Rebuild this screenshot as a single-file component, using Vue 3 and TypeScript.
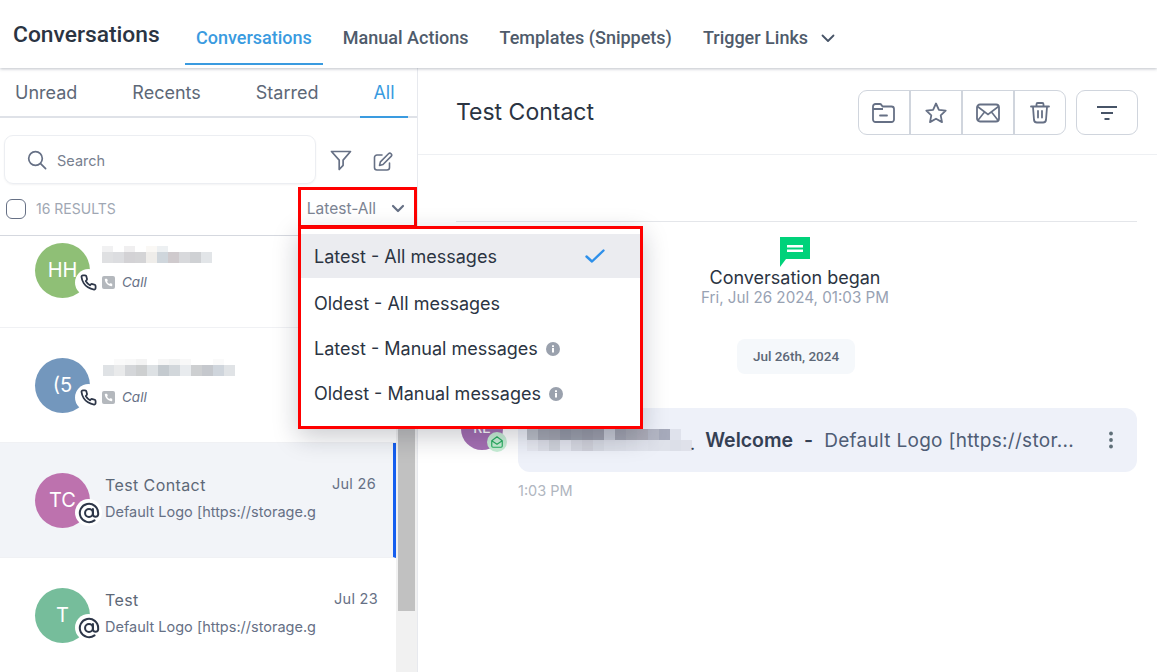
<script setup lang="ts">
const navTabs = [
  { label: 'Conversations', active: true },
  { label: 'Manual Actions', active: false },
  { label: 'Templates (Snippets)', active: false },
  { label: 'Trigger Links', active: false, caret: true },
]
const sideTabs = ['Unread', 'Recents', 'Starred', 'All']
const phone = 'M22 16.920v3a2 2 0 0 1-2.180 2 19.790 19.790 0 0 1-8.630-3.070 19.500 19.500 0 0 1-6-6 19.790 19.790 0 0 1-3.070-8.670A2 2 0 0 1 4.110 2h3a2 2 0 0 1 2 1.720c.130.960.360 1.900.700 2.810a2 2 0 0 1-.450 2.110L8.090 9.910a16 16 0 0 0 6 6l1.270-1.270a2 2 0 0 1 2.110-.450c.910.340 1.850.570 2.810.700A2 2 0 0 1 22 16.920z'
const blurA = [
  ['#f1f1f2', '#fff', '#f0eff0', '#fff', '#faf8f5', '#edf0f2', '#fff', '#fff', '#fff', '#fff'],
  ['#dfe0e2', '#dcdde0', '#d3d2d5', '#d4d4d6', '#efedea', '#cfd6dc', '#cfcacd', '#d8d9dc', '#cfd1d4', '#e2e5e8'],
]
const blurB = [
  ['#fff', '#fafafa', '#f8f8f8', '#f3f3f3', '#fff', '#f6f6f6', '#f2f3f3', '#f8f8f8', '#fff', '#fff', '#fafafa', '#fff'],
  ['#dfe2e5', '#e9eaeb', '#d4d6d9', '#cdcfd0', '#dde1e4', '#c4cacf', '#d2d7db', '#e8ebee', '#cdcfd1', '#c5c8cd', '#cfd5dc', '#e0e3e6'],
]
const blurC = [
  ['#bcc0c9', '#a5a8b3', '#a3a5b0', '#979ba8', '#9da1ad', '#9a9ca9', '#9ea0ad', '#c8cbd6', '#a2a4b1', '#a9abb6', '#acacb8', '#b3b6c4', '#a6aabb', '#dfe2ec', '#eef1f9'],
  ['#e6e8f0', '#dcdee7', '#cfd2da', '#e3e5ee', '#d5d7e0', '#cfd0d9', '#d6d9e2', '#dcdfe8', '#dde0e9', '#dfe2eb', '#e0e3ec', '#dee1ea', '#dfe2ea', '#dcdfe8', '#dfe1ea'],
]
const menu = [
  { label: 'Latest - All messages', selected: true },
  { label: 'Oldest - All messages' },
  { label: 'Latest - Manual messages', info: true },
  { label: 'Oldest - Manual messages', info: true },
]
</script>

<template>
  <div class="page">
    <header class="topbar">
      <div class="brand">Conversations</div>
      <nav class="nav">
        <div v-for="t in navTabs" :key="t.label" class="nav-tab" :class="{ active: t.active }">
          {{ t.label }}
          <svg v-if="t.caret" class="caret" width="14" height="9" viewBox="0 0 14 9" fill="none"><path d="M1.500 1.500 7 7l5.500-5.500" stroke="#475467" stroke-width="1.800" stroke-linecap="round" stroke-linejoin="round"/></svg>
        </div>
      </nav>
    </header>

    <div class="body">
      <aside class="side">
        <div class="side-tabs">
          <div v-for="t in sideTabs" :key="t" class="side-tab" :class="{ on: t === 'All' }">{{ t }}</div>
        </div>
        <div class="search-row">
          <div class="search">
            <svg width="20" height="20" viewBox="0 0 20 20" fill="none"><circle cx="8.500" cy="8.500" r="6.800" stroke="#667085" stroke-width="1.700"/><path d="m13.600 13.600 5 5" stroke="#667085" stroke-width="1.700" stroke-linecap="round"/></svg>
            <span>Search</span>
          </div>
          <svg class="ic-filter" width="22" height="21" viewBox="0 0 22 21" fill="none"><path d="M1.500 1.500h19l-7.400 8.600v5.200l-3.900 4.200v-9.400z" stroke="#667085" stroke-width="1.700" stroke-linejoin="round"/></svg>
          <svg class="ic-edit" width="20" height="20" viewBox="0 0 20 20" fill="none"><path d="M9 3H4a2.500 2.500 0 0 0-2.500 2.500v10A2.500 2.500 0 0 0 4 18h10a2.500 2.500 0 0 0 2.500-2.500V11" stroke="#667085" stroke-width="1.600" stroke-linecap="round"/><path d="M15.500 1.800a1.800 1.800 0 0 1 2.600 2.600L10 12.500l-3.500.9.900-3.500z" stroke="#667085" stroke-width="1.600" stroke-linejoin="round"/></svg>
        </div>
        <div class="results">
          <span class="check"></span>
          <span class="count">16 RESULTS</span>
          <span class="sort">Latest-All</span>
          <svg width="14" height="9" viewBox="0 0 14 9" fill="none"><path d="M2 2l5 5 5-5" stroke="#667085" stroke-width="2.200" stroke-linecap="round" stroke-linejoin="round"/></svg>
        </div>
        <div class="list-wrap">
          <div class="list">
            <div class="item first">
              <div class="avatar green">HH
                <span class="badge"><svg width="17" height="17" viewBox="0 0 24 24" fill="none"><path :d="phone" stroke="#2d3648" stroke-width="2.500" stroke-linejoin="round"/></svg></span>
              </div>
              <div class="call-body">
                <div class="blur blur-a">
                  <div v-for="(r, i) in blurA" :key="i" class="blur-row">
                    <i v-for="(c, j) in r" :key="j" :style="{ background: c }"></i>
                  </div>
                </div>
                <div class="call-line">
                  <span class="call-ic"><svg width="9" height="9" viewBox="0 0 24 24"><path :d="phone" fill="#fff"/></svg></span>
                  <em>Call</em>
                </div>
              </div>
            </div>
            <div class="item">
              <div class="avatar blue">(5
                <span class="badge"><svg width="17" height="17" viewBox="0 0 24 24" fill="none"><path :d="phone" stroke="#2d3648" stroke-width="2.500" stroke-linejoin="round"/></svg></span>
              </div>
              <div class="call-body">
                <div class="blur blur-b">
                  <div v-for="(r, i) in blurB" :key="i" class="blur-row">
                    <i v-for="(c, j) in r" :key="j" :style="{ background: c }"></i>
                  </div>
                </div>
                <div class="call-line second">
                  <span class="call-ic"><svg width="9" height="9" viewBox="0 0 24 24"><path :d="phone" fill="#fff"/></svg></span>
                  <em>Call</em>
                </div>
              </div>
            </div>
            <div class="item selected">
              <div class="avatar pink">TC
                <span class="badge"><svg width="22" height="22" viewBox="0 0 24 24" fill="none"><circle cx="12" cy="12" r="4.300" stroke="#2d3648" stroke-width="2.200"/><path d="M16.300 7.700v6.100a2.900 2.900 0 0 0 5.700 0V12a10 10 0 1 0-4 8" stroke="#2d3648" stroke-width="2.200" stroke-linecap="round"/></svg></span>
              </div>
              <div class="mail-body">
                <div class="name-row"><span class="name">Test Contact</span><span class="date">Jul 26</span></div>
                <div class="preview">Default Logo [https://storage.g</div>
              </div>
            </div>
            <div class="item">
              <div class="avatar teal">T
                <span class="badge"><svg width="22" height="22" viewBox="0 0 24 24" fill="none"><circle cx="12" cy="12" r="4.300" stroke="#2d3648" stroke-width="2.200"/><path d="M16.300 7.700v6.100a2.900 2.900 0 0 0 5.700 0V12a10 10 0 1 0-4 8" stroke="#2d3648" stroke-width="2.200" stroke-linecap="round"/></svg></span>
              </div>
              <div class="mail-body">
                <div class="name-row"><span class="name">Test</span><span class="date d2">Jul 23</span></div>
                <div class="preview">Default Logo [https://storage.g</div>
              </div>
            </div>
          </div>
          <div class="scrollbar"><div class="thumb"></div></div>
        </div>
      </aside>

      <main class="main">
        <div class="main-head">
          <h1>Test Contact</h1>
          <div class="actions">
            <div class="act-group">
              <button><svg width="26" height="24" viewBox="0 0 26 24" fill="none"><path d="M2 5.500A2.500 2.500 0 0 1 4.500 3h4.300a2 2 0 0 1 1.700.900l1 1.600h9A2.500 2.500 0 0 1 23 8v10.500a2.500 2.500 0 0 1-2.500 2.500h-16A2.500 2.500 0 0 1 2 18.500zM2 8h10" stroke="#667085" stroke-width="1.800" stroke-linejoin="round"/><path d="M9 14.500h7" stroke="#667085" stroke-width="1.800" stroke-linecap="round"/></svg></button>
              <button><svg width="24" height="24" viewBox="0 0 24 24" fill="none"><path d="m12 2.500 2.900 6.300 6.800.8-5 4.700 1.300 6.800-6-3.400-6 3.400 1.300-6.800-5-4.700 6.800-.8z" stroke="#667085" stroke-width="1.800" stroke-linejoin="round"/></svg></button>
              <button><svg width="26" height="22" viewBox="0 0 26 22" fill="none"><rect x="2" y="2.500" width="22" height="17" rx="3" stroke="#667085" stroke-width="1.800"/><path d="m2.500 4.500 10.500 8 10.500-8M2.800 18.500 9.500 10M23.200 18.500 16.500 10" stroke="#667085" stroke-width="1.600"/></svg></button>
              <button><svg width="22" height="24" viewBox="0 0 22 24" fill="none"><path d="M2 5.500h18M7.500 5V3.200A1.200 1.200 0 0 1 8.700 2h4.600a1.200 1.200 0 0 1 1.200 1.200V5M4 6l1 13a3 3 0 0 0 3 2.500h6a3 3 0 0 0 3-2.500l1-13M9 10v6.500M13 10v6.500" stroke="#667085" stroke-width="1.800" stroke-linecap="round"/></svg></button>
            </div>
            <button class="act-sort"><svg width="22" height="16" viewBox="0 0 22 16" fill="none"><path d="M1 2h20M5 8h12M8.500 14h5" stroke="#475467" stroke-width="2"/></svg></button>
          </div>
        </div>
        <div class="thread">
          <div class="rule"></div>
          <div class="began">
            <svg width="32" height="30" viewBox="0 0 32 30"><path d="M1 0h30v22H7l-6 8z" fill="#00d27a"/><path d="M8 8h16v2.500H8zM8 12.500h16V15H8z" fill="#fff"/></svg>
            <div class="began-title">Conversation began</div>
            <div class="began-sub">Fri, Jul 26 2024, 01:03 PM</div>
          </div>
          <div class="pill">Jul 26th, 2024</div>
          <div class="msg">
            <div class="msg-avatar">RE
              <span class="msg-badge"><svg width="14" height="14" viewBox="0 0 24 24" fill="none"><path d="M3 10 12 3l9 7v9a2 2 0 0 1-2 2H5a2 2 0 0 1-2-2z M3 10l9 6 9-6" stroke="#27ae60" stroke-width="2" stroke-linejoin="round"/></svg></span>
            </div>
            <div class="msg-col">
              <div class="bubble">
                <div class="blur blur-c">
                  <div v-for="(r, i) in blurC" :key="i" class="blur-row">
                    <i v-for="(c, j) in r" :key="j" :style="{ background: c }"></i>
                  </div>
                </div>
                <span class="dot">.</span>
                <strong>Welcome</strong>
                <strong class="dash">-</strong>
                <span class="msg-text">Default Logo [https://stor...</span>
                <svg class="kebab" width="6" height="18" viewBox="0 0 6 18"><circle cx="3" cy="2.500" r="1.900" fill="#5f6f78"/><circle cx="3" cy="9" r="1.900" fill="#5f6f78"/><circle cx="3" cy="15.500" r="1.900" fill="#5f6f78"/></svg>
              </div>
              <div class="time">1:03 PM</div>
            </div>
          </div>
        </div>
      </main>
    </div>

    <div class="hl-sort"></div>
    <div class="dropdown">
      <div v-for="m in menu" :key="m.label" class="menu-item" :class="{ sel: m.selected }">
        <span>{{ m.label }}</span>
        <svg v-if="m.info" class="info" width="14" height="14" viewBox="0 0 14 14"><circle cx="7" cy="7" r="7" fill="#9aa1ad"/><rect x="6" y="6" width="2" height="4.500" fill="#fff"/><rect x="6" y="3.300" width="2" height="1.800" fill="#fff"/></svg>
        <svg v-if="m.selected" class="tick" width="20" height="14" viewBox="0 0 20 14" fill="none"><path d="m1.500 7.500 5.500 5L18.500 1.500" stroke="#2e90ea" stroke-width="2.400" stroke-linecap="round" stroke-linejoin="round"/></svg>
      </div>
    </div>
  </div>
</template>

<style>
html, body { margin: 0; background: #fff; }
</style>

<style scoped>
.page { position: relative; width: 1157px; height: 672px; overflow: hidden; background: #fff; font-family: Inter, "Liberation Sans", sans-serif; color: #344054; }
.topbar { height: 68px; display: flex; align-items: flex-end; padding-left: 13px; box-shadow: 0 1px 3px rgba(70, 80, 100, .35); position: relative; z-index: 2; background: #fff; box-sizing: border-box; }
.brand { font: 500 22.800px/28px Roboto, sans-serif; color: #2b3442; width: 161px; flex: none; align-self: flex-start; margin-top: 21px; }
.nav { display: flex; gap: 9px; margin-left: 11px; height: 100%; align-items: stretch; }
.nav-tab { font: 500 18px/24px Roboto, sans-serif; color: #4f5b6b; padding: 26px 11px 0; height: 65px; box-sizing: border-box; white-space: nowrap; }
.nav-tab.active { color: #3a9be0; border-bottom: 2px solid #3a9be0; }
.caret { margin-left: 8px; position: relative; top: -1px; }
.body { display: flex; height: 604px; }
.side { width: 418px; flex: none; border-right: 1px solid #e7e9ee; box-sizing: border-box; display: flex; flex-direction: column; }
.side-tabs { height: 50px; display: flex; gap: 29px; padding-left: 2px; border-bottom: 2px solid #dfe2e8; box-sizing: border-box; width: 417px; }
.side-tab { padding: 12px 13px 0; font-size: 18px; line-height: 26px; color: #5d6877; height: 50px; box-sizing: border-box; }
.side-tab.on { color: #3a9be0; border-bottom: 2px solid #3a9be0; }
.search-row { display: flex; align-items: center; padding: 17px 0 0 4px; height: 66px; box-sizing: border-box; }
.search { width: 312px; height: 49px; box-sizing: border-box; border: 1px solid #eceef2; border-radius: 9px; box-shadow: 0 1px 2px rgba(16, 24, 40, .05); display: flex; align-items: center; gap: 10px; padding-left: 22px; font-size: 14.500px; color: #77808f; }
.search span { position: relative; top: 1px; }
.ic-filter { margin-left: 14px; margin-top: 2px; }
.ic-edit { margin-left: 21px; margin-top: 4px; }
.results { display: flex; align-items: center; height: 52px; padding: 0 12px 2px 6px; border-bottom: 1px solid #d5d8df; box-sizing: border-box; width: 417px; }
.check { width: 20px; height: 20px; border: 1px solid #667085; border-radius: 6px; box-sizing: border-box; flex: none; }
.count { margin-left: 10px; font-size: 14px; color: #a0a7b3; flex: 1; }
.sort { font-size: 15.500px; color: #7c8493; margin-right: 15px; }
.list-wrap { display: flex; height: 436px; overflow: hidden; width: 417px; }
.list { width: 396px; flex: none; }
.item { height: 115px; display: flex; padding: 30px 0 0 35px; box-sizing: border-box; border-bottom: 1px solid #f0f1f4; }
.item.first { height: 92px; padding-top: 7px; }
.item.selected { background: #f2f4f8; border-right: 3px solid #155eef; }
.avatar { width: 55px; height: 55px; border-radius: 50%; color: #fff; font-size: 20px; display: flex; align-items: center; justify-content: center; position: relative; flex: none; padding-bottom: 2px; box-sizing: border-box; }
.green { background: #8fbf76; }
.blue { background: #7397bd; }
.pink { background: #bd72ae; }
.teal { background: #76bd9b; }
.badge { position: absolute; left: 40px; top: 26px; width: 27px; height: 27px; border-radius: 50%; background: #fff; display: flex; align-items: center; justify-content: center; }
.call-body { margin-left: 12px; }
.blur { display: flex; flex-direction: column; flex: none; }
.blur-row { display: flex; }
.blur-row i { display: block; width: 11px; flex: none; }
.blur-row:first-child i { height: 6px; }
.blur-row:last-child i { height: 11px; }
.blur-a { margin-top: 3px; }
.blur-b { margin-left: 1px; margin-top: 1px; }
.call-line { display: flex; align-items: center; margin-top: 13px; font-size: 13.500px; color: #667085; }
.call-line.second { margin-top: 15px; }
.call-ic { width: 13px; height: 13px; background: #b4b8bd; border-radius: 2px; display: flex; align-items: center; justify-content: center; margin-right: 7px; }
.call-line em { font-style: italic; line-height: 13px; }
.mail-body { margin-left: 15px; width: 273px; flex: none; }
.name-row { display: flex; justify-content: space-between; padding-top: 3px; }
.name { font-size: 16px; line-height: 18px; color: #5d6877; letter-spacing: .4px; }
.date { font-size: 14.500px; line-height: 18px; color: #667085; letter-spacing: .3px; margin-right: 2px; margin-top: -1px; }
.date.d2 { margin-right: 0; }
.preview { margin-top: 9px; font-size: 14.500px; line-height: 18px; color: #667085; white-space: nowrap; }
.scrollbar { width: 21px; flex: none; background: #f1f1f1; }
.thumb { width: 17px; margin-left: 2px; height: 375px; background: #c1c1c1; }
.main { flex: 1; min-width: 0; }
.main-head { height: 87px; border-bottom: 1px solid #eef0f3; box-sizing: border-box; display: flex; align-items: center; justify-content: space-between; padding: 0 19px 0 38px; }
h1 { margin: 0; font-family: Inter, sans-serif; font-weight: 400; font-size: 23px; color: #2b3442; position: relative; top: 1px; }
.actions { display: flex; gap: 10px; margin-top: 3px; }
.act-group { display: flex; width: 208px; height: 45px; border: 1px solid #d0d5dd; border-radius: 9px; box-sizing: border-box; }
.act-group button { flex: 1 1 0; border: 0; background: none; padding: 0; display: flex; align-items: center; justify-content: center; border-right: 2px solid #d0d5dd; }
.act-group button:last-child { border-right: 0; }
.act-sort { width: 62px; height: 45px; background: none; border: 1px solid #d0d5dd; border-radius: 9px; display: flex; align-items: center; justify-content: center; padding: 0; }
.thread { padding: 66px 20px 0 38px; }
.rule { height: 1px; background: #e4e6ea; }
.began { display: flex; flex-direction: column; align-items: center; margin-top: 15px; padding-right: 3px; }
.began svg { display: block; }
.began-title { font-size: 18px; line-height: 20px; color: #2b3442; margin-top: 1px; }
.began-sub { font-size: 15.200px; line-height: 20px; color: #98a2b3; }
.pill { width: 118px; height: 35px; margin: 31px 0 0 281px; background: #f5f8fb; border-radius: 8px; font: 500 13.500px/35px Roboto, sans-serif; color: #5d6877; text-align: center; }
.msg { display: flex; margin-top: 34px; margin-left: 5px; }
.msg-avatar { width: 42px; height: 42px; border-radius: 50%; background: #a56fb3; color: #fff; font-size: 14px; font-weight: 500; position: relative; flex: none; text-align: center; line-height: 40px; }
.msg-badge { position: absolute; left: 26px; top: 24px; width: 20px; height: 20px; border-radius: 50%; background: #c8efd6; display: flex; align-items: center; justify-content: center; }
.msg-col { margin-left: 15px; }
.bubble { width: 619px; height: 64px; box-sizing: border-box; background: #eef1f9; border-radius: 12px; display: flex; align-items: center; padding-left: 9px; white-space: nowrap; position: relative; }
.blur-c .blur-row:first-child i, .blur-c .blur-row:last-child i { height: 11px; }
.dot { font-size: 18px; margin: 0 10px 0 -2px; color: #344054; position: relative; top: 3px; }
strong { font-size: 19.500px; font-weight: 600; color: #344054; }
.dash { margin: 0 11px 0 11px; }
.msg-text { font-size: 19px; letter-spacing: .3px; color: #4f5d75; }
.kebab { position: absolute; left: 590px; top: 23px; }
.time { margin-top: 9px; font-size: 14.500px; color: #b0b6c0; line-height: 20px; }
.hl-sort { position: absolute; left: 298px; top: 187px; width: 119px; height: 41px; border: 3px solid #f00; box-sizing: border-box; }
.dropdown { position: absolute; left: 298px; top: 226px; width: 345px; height: 203px; box-sizing: border-box; border: 3px solid #f00; background: #fff; padding-top: 5px; box-shadow: 0 8px 24px rgba(16, 24, 40, .22); }
.menu-item { height: 45px; display: flex; align-items: center; padding-left: 13px; font-size: 18px; color: #2b3442; position: relative; }
.menu-item.sel { background: #ebecf0; height: 44px; margin-bottom: 3px; }
.info { margin-left: 8px; }
.tick { position: absolute; left: 284px; top: 15px; }
</style>
